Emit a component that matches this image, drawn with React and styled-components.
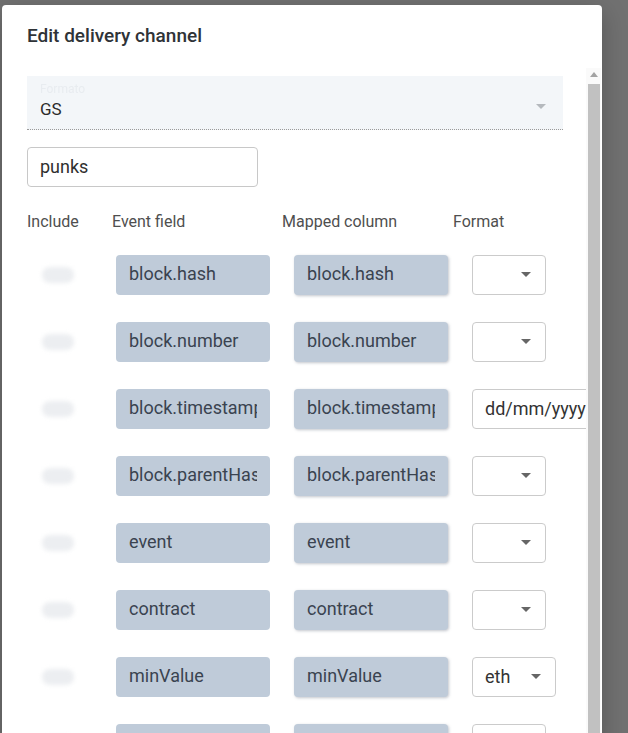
import React from "react";
import styled, { createGlobalStyle } from "styled-components";

const GlobalStyle = createGlobalStyle`
  html, body {
    margin: 0;
    padding: 0;
    background-color: #717171;
    overflow: hidden;
  }
  * {
    box-sizing: border-box;
  }
`;

const Page = styled.div`
  height: 733px;
  padding: 5px 0 0 2px;
  font-family: Roboto, "Liberation Sans", sans-serif;
`;

const Dialog = styled.div`
  width: 600px;
  height: 740px;
  background-color: #ffffff;
  border-radius: 4px 4px 0 0;
  box-shadow: 0 8px 24px rgba(0, 0, 0, 0.25);
  display: flex;
  flex-direction: column;
  overflow: hidden;
`;

const Title = styled.h2`
  margin: 0;
  padding: 19px 24px 0 25px;
  height: 63px;
  font-size: 19px;
  font-weight: 500;
  color: #2f3337;
`;

const Body = styled.div`
  flex: 1;
  display: flex;
  min-height: 0;
`;

const Content = styled.div`
  flex: 1;
  overflow: hidden;
  padding: 8px 0 0 25px;
`;

const Scrollbar = styled.div`
  width: 15px;
  margin-right: 1px;
  background-color: #fafafa;
  display: flex;
  flex-direction: column;
  align-items: center;
`;

const ScrollArrow = styled.div`
  margin-top: 4px;
  width: 0;
  height: 0;
  border-left: 4px solid transparent;
  border-right: 4px solid transparent;
  border-bottom: 5px solid #a3a3a3;
`;

const ScrollThumb = styled.div`
  margin-top: 7px;
  width: 12px;
  flex: 1;
  background-color: #c1c1c1;
`;

const FilledSelect = styled.div`
  width: 536px;
  height: 54px;
  background-color: #f3f6f9;
  border-bottom: 1px dotted #9a9a9a;
  padding: 7px 17px 0 13px;
  display: flex;
  align-items: center;
  position: relative;
`;

const FloatLabel = styled.span`
  position: absolute;
  left: 13px;
  top: 6px;
  font-size: 12px;
  color: #e8ecf0;
  filter: blur(0.7px);
`;

const SelectValue = styled.span`
  flex: 1;
  font-size: 17px;
  color: #2b2b2b;
  padding-top: 6px;
`;

const Caret = styled.span`
  width: 0;
  height: 0;
  border-left: 5px solid transparent;
  border-right: 5px solid transparent;
  border-top: 5px solid ${(p) => p.color || "#666"};
`;

const TextInput = styled.div`
  margin-top: 17px;
  width: 231px;
  height: 40px;
  border: 1px solid #c8c8c8;
  border-radius: 4px;
  padding: 0 0 2px 12px;
  display: flex;
  align-items: center;
  font-size: 18px;
  color: #2f2f2f;
`;

const Grid = styled.div`
  display: grid;
  grid-template-columns: 85px 170px 171px 1fr;
`;

const HeaderRow = styled(Grid)`
  margin-top: 25px;
  height: 43px;
`;

const HeaderCell = styled.div`
  font-size: 16px;
  color: #4f4f4f;
  line-height: 20px;
`;

const Row = styled(Grid)`
  height: 67px;
  align-items: start;
`;

const SwitchCell = styled.div`
  height: 40px;
  display: flex;
  align-items: center;
  padding-left: 15px;
`;

const Switch = styled.div`
  width: 32px;
  height: 16px;
  border-radius: 8px;
  background-color: #eceef1;
  filter: blur(2px);
`;

const FieldBox = styled.div`
  margin-left: ${(p) => p.offset}px;
  width: 154px;
  height: 40px;
  border-radius: 4px;
  background-color: #bfcbd9;
  box-shadow: ${(p) => (p.shadow ? "1px 1px 3px rgba(80, 90, 110, 0.35)" : "none")};
  padding: 0 13px 3px;
  display: flex;
  align-items: center;
`;

const FieldText = styled.span`
  flex: 1;
  font-size: 18px;
  color: #3a4350;
  white-space: nowrap;
  overflow: hidden;
`;

const FormatSelect = styled.div`
  margin-left: 19px;
  width: ${(p) => p.width}px;
  height: 40px;
  border: 1px solid #cbcbcb;
  border-radius: 4px;
  padding: 0 14px 2px 12px;
  display: flex;
  align-items: center;
  font-size: 18px;
  color: #333;
  white-space: nowrap;
  overflow: hidden;
`;

const FormatText = styled.span`
  flex: 1;
`;

const rows = [
  { field: "block.hash", format: { kind: "select", value: "" } },
  { field: "block.number", format: { kind: "select", value: "" } },
  { field: "block.timestamp", format: { kind: "input", value: "dd/mm/yyyy" } },
  { field: "block.parentHash", format: { kind: "select", value: "" } },
  { field: "event", format: { kind: "select", value: "" } },
  { field: "contract", format: { kind: "select", value: "" } },
  { field: "minValue", format: { kind: "select", value: "eth" } },
  { field: "", format: { kind: "select", value: "" } },
];

function Format({ format }) {
  if (format.kind === "input") {
    return (
      <FormatSelect width={140}>
        <FormatText>{format.value}</FormatText>
      </FormatSelect>
    );
  }
  return (
    <FormatSelect width={format.value ? 84 : 74}>
      <FormatText>{format.value}</FormatText>
      <Caret />
    </FormatSelect>
  );
}

export default function App() {
  return (
    <>
      <GlobalStyle />
      <Page>
        <Dialog>
          <Title>Edit delivery channel</Title>
          <Body>
            <Content>
              <FilledSelect>
                <FloatLabel>Formato</FloatLabel>
                <SelectValue>GS</SelectValue>
                <Caret color="#b5b9be" />
              </FilledSelect>
              <TextInput>punks</TextInput>
              <HeaderRow>
                <HeaderCell>Include</HeaderCell>
                <HeaderCell>Event field</HeaderCell>
                <HeaderCell>Mapped column</HeaderCell>
                <HeaderCell>Format</HeaderCell>
              </HeaderRow>
              {rows.map((r, i) => (
                <Row key={i}>
                  <SwitchCell>
                    <Switch />
                  </SwitchCell>
                  <FieldBox offset={4}>
                    <FieldText>{r.field}</FieldText>
                  </FieldBox>
                  <FieldBox offset={12} shadow>
                    <FieldText>{r.field}</FieldText>
                  </FieldBox>
                  <Format format={r.format} />
                </Row>
              ))}
            </Content>
            <Scrollbar>
              <ScrollArrow />
              <ScrollThumb />
            </Scrollbar>
          </Body>
        </Dialog>
      </Page>
    </>
  );
}
